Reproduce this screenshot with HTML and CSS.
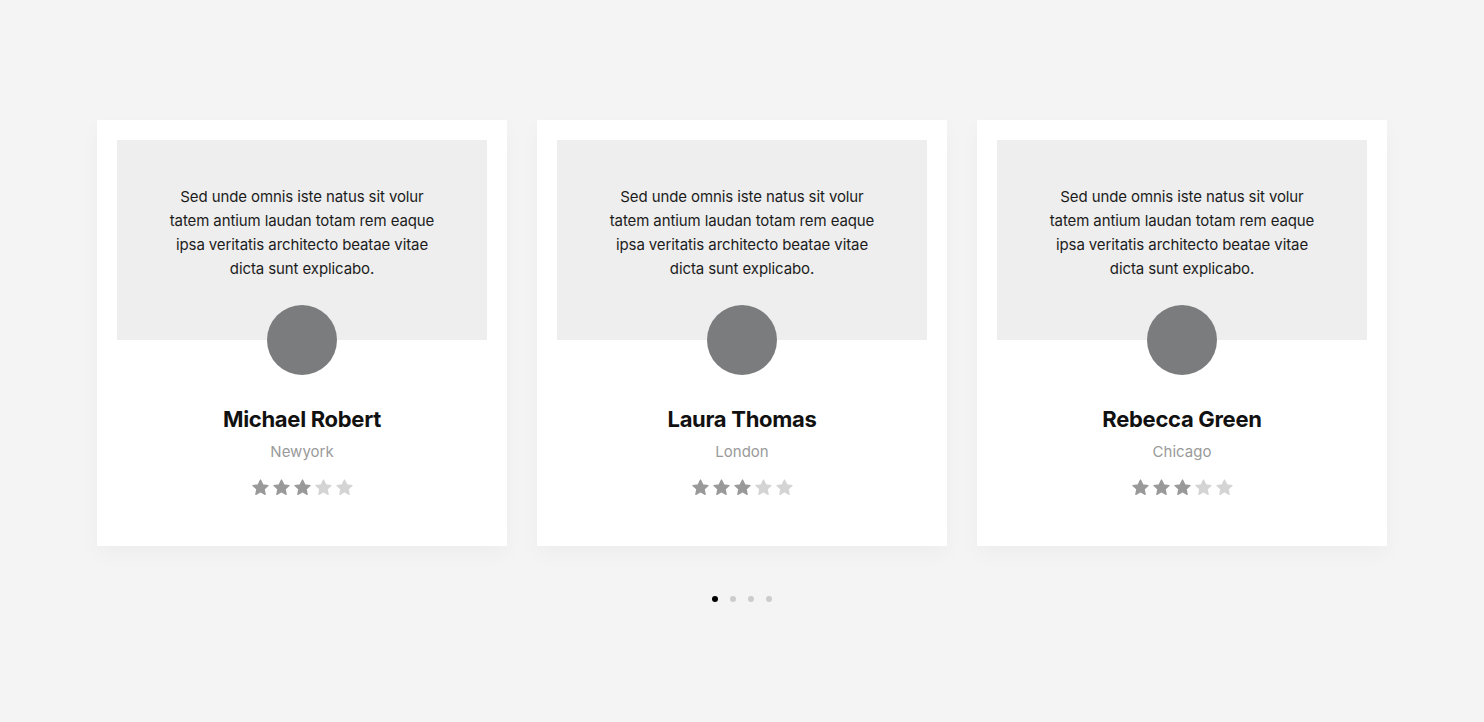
FILE: index.html
```html
<!DOCTYPE html>
<html>
<head>
<meta charset="utf-8">
<link rel="stylesheet" href="styles.css">
</head>
<body>
<main class="section">
  <div class="cards">
    <article class="card">
      <div class="quote"><p>Sed unde omnis iste natus sit volur tatem antium laudan totam rem eaque ipsa veritatis architecto beatae vitae dicta sunt explicabo.</p></div>
      <div class="avatar"></div>
      <h3 class="name">Michael Robert</h3>
      <div class="city">Newyork</div>
      <div class="stars">
        <svg class="star on" viewBox="0 0 24 24"><path d="M12 2.5l2.9 6.2 6.6.8-4.9 4.6 1.3 6.6L12 17.4l-5.9 3.3 1.3-6.6-4.9-4.6 6.6-.8z"/></svg>
        <svg class="star on" viewBox="0 0 24 24"><path d="M12 2.5l2.9 6.2 6.6.8-4.9 4.6 1.3 6.6L12 17.4l-5.9 3.3 1.3-6.6-4.9-4.6 6.6-.8z"/></svg>
        <svg class="star on" viewBox="0 0 24 24"><path d="M12 2.5l2.9 6.2 6.6.8-4.9 4.6 1.3 6.6L12 17.4l-5.9 3.3 1.3-6.6-4.9-4.6 6.6-.8z"/></svg>
        <svg class="star" viewBox="0 0 24 24"><path d="M12 2.5l2.9 6.2 6.6.8-4.9 4.6 1.3 6.6L12 17.4l-5.9 3.3 1.3-6.6-4.9-4.6 6.6-.8z"/></svg>
        <svg class="star" viewBox="0 0 24 24"><path d="M12 2.5l2.9 6.2 6.6.8-4.9 4.6 1.3 6.6L12 17.4l-5.9 3.3 1.3-6.6-4.9-4.6 6.6-.8z"/></svg>
      </div>
    </article>
    <article class="card">
      <div class="quote"><p>Sed unde omnis iste natus sit volur tatem antium laudan totam rem eaque ipsa veritatis architecto beatae vitae dicta sunt explicabo.</p></div>
      <div class="avatar"></div>
      <h3 class="name">Laura Thomas</h3>
      <div class="city">London</div>
      <div class="stars">
        <svg class="star on" viewBox="0 0 24 24"><path d="M12 2.5l2.9 6.2 6.6.8-4.9 4.6 1.3 6.6L12 17.4l-5.9 3.3 1.3-6.6-4.9-4.6 6.6-.8z"/></svg>
        <svg class="star on" viewBox="0 0 24 24"><path d="M12 2.5l2.9 6.2 6.6.8-4.9 4.6 1.3 6.6L12 17.4l-5.9 3.3 1.3-6.6-4.9-4.6 6.6-.8z"/></svg>
        <svg class="star on" viewBox="0 0 24 24"><path d="M12 2.5l2.9 6.2 6.6.8-4.9 4.6 1.3 6.6L12 17.4l-5.9 3.3 1.3-6.6-4.9-4.6 6.6-.8z"/></svg>
        <svg class="star" viewBox="0 0 24 24"><path d="M12 2.5l2.9 6.2 6.6.8-4.9 4.6 1.3 6.6L12 17.4l-5.9 3.3 1.3-6.6-4.9-4.6 6.6-.8z"/></svg>
        <svg class="star" viewBox="0 0 24 24"><path d="M12 2.5l2.9 6.2 6.6.8-4.9 4.6 1.3 6.6L12 17.4l-5.9 3.3 1.3-6.6-4.9-4.6 6.6-.8z"/></svg>
      </div>
    </article>
    <article class="card">
      <div class="quote"><p>Sed unde omnis iste natus sit volur tatem antium laudan totam rem eaque ipsa veritatis architecto beatae vitae dicta sunt explicabo.</p></div>
      <div class="avatar"></div>
      <h3 class="name">Rebecca Green</h3>
      <div class="city">Chicago</div>
      <div class="stars">
        <svg class="star on" viewBox="0 0 24 24"><path d="M12 2.5l2.9 6.2 6.6.8-4.9 4.6 1.3 6.6L12 17.4l-5.9 3.3 1.3-6.6-4.9-4.6 6.6-.8z"/></svg>
        <svg class="star on" viewBox="0 0 24 24"><path d="M12 2.5l2.9 6.2 6.6.8-4.9 4.6 1.3 6.6L12 17.4l-5.9 3.3 1.3-6.6-4.9-4.6 6.6-.8z"/></svg>
        <svg class="star on" viewBox="0 0 24 24"><path d="M12 2.5l2.9 6.2 6.6.8-4.9 4.6 1.3 6.6L12 17.4l-5.9 3.3 1.3-6.6-4.9-4.6 6.6-.8z"/></svg>
        <svg class="star" viewBox="0 0 24 24"><path d="M12 2.5l2.9 6.2 6.6.8-4.9 4.6 1.3 6.6L12 17.4l-5.9 3.3 1.3-6.6-4.9-4.6 6.6-.8z"/></svg>
        <svg class="star" viewBox="0 0 24 24"><path d="M12 2.5l2.9 6.2 6.6.8-4.9 4.6 1.3 6.6L12 17.4l-5.9 3.3 1.3-6.6-4.9-4.6 6.6-.8z"/></svg>
      </div>
    </article>
  </div>
  <div class="dots">
    <span class="dot active"></span>
    <span class="dot"></span>
    <span class="dot"></span>
    <span class="dot"></span>
  </div>
</main>
</body>
</html>
```

FILE: styles.css
```css
* { box-sizing: border-box; }
html, body {
  margin: 0;
  padding: 0;
  background: #f4f4f4;
  font-family: "Inter", "Noto Sans", sans-serif;
}
.section {
  padding-top: 120px;
  display: flex;
  flex-direction: column;
  align-items: center;
}
.cards {
  display: flex;
  gap: 30px;
}
.card {
  width: 410px;
  height: 426px;
  background: #fff;
  padding: 20px;
  display: flex;
  flex-direction: column;
  align-items: center;
  box-shadow: 0 8px 20px rgba(0,0,0,0.03);
}
.quote {
  width: 370px;
  height: 200px;
  background: #eeeeee;
  padding: 45px 44px 0;
}
.quote p {
  margin: 0;
  text-align: center;
  font-size: 15px;
  line-height: 24px;
  color: #1c1c1c;
  letter-spacing: -0.1px;
}
.avatar {
  width: 70px;
  height: 70px;
  border-radius: 50%;
  background: #7b7c7d;
  margin-top: -35px;
}
.name {
  margin: 29px 0 0;
  font-size: 22px;
  line-height: 30px;
  font-weight: 700;
  color: #111;
  letter-spacing: -0.3px;
}
.city {
  margin-top: 8px;
  font-size: 15px;
  line-height: 20px;
  color: #9a9a9a;
}
.stars {
  margin-top: 16px;
  display: flex;
  gap: 2px;
}
.star {
  width: 19px;
  height: 19px;
  fill: #d4d4d4;
  stroke: #d4d4d4;
  stroke-width: 1.6;
  stroke-linejoin: round;
}
.star.on { fill: #999999; stroke: #999999; }
.dots {
  margin-top: 50px;
  display: flex;
  gap: 12px;
}
.dot {
  width: 6px;
  height: 6px;
  border-radius: 50%;
  background: #cccccc;
}
.dot.active { background: #000; }
```
